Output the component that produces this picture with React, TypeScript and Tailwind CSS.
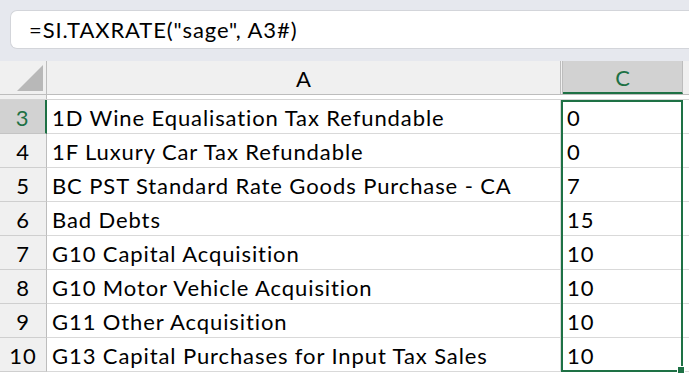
import React from "react";

const rows: [string, string, string][] = [
  ["3", "1D Wine Equalisation Tax Refundable", "0"],
  ["4", "1F Luxury Car Tax Refundable", "0"],
  ["5", "BC PST Standard Rate Goods Purchase - CA", "7"],
  ["6", "Bad Debts", "15"],
  ["7", "G10 Capital Acquisition", "10"],
  ["8", "G10 Motor Vehicle Acquisition", "10"],
  ["9", "G11 Other Acquisition", "10"],
  ["10", "G13 Capital Purchases for Input Tax Sales", "10"],
];

export default function App() {
  return (
    <div
      className="w-[689px] h-[376px] overflow-hidden bg-white text-black"
      style={{ fontFamily: "Lato, 'Open Sans', sans-serif" }}
    >
      {/* formula area */}
      <div className="h-[61px] bg-[#e6e8ee] pt-[10px] pl-[10px]">
        <div className="h-[39px] bg-white rounded-l-[7px] border border-r-0 border-[#d3d5da] flex items-center pl-[18px] text-[22px] tracking-[0.9px] leading-none">
          =SI.TAXRATE("sage", A3#)
        </div>
      </div>

      {/* column header row */}
      <div className="flex h-[34px] bg-[#f0f0f0] border-b border-[#bdbdbd]">
        <div className="w-[47px] shrink-0 border-r border-[#bdbdbd] relative">
          <div
            className="absolute right-[3px] bottom-[3px] w-[26px] h-[26px] bg-[#b8b8b8]"
            style={{ clipPath: "polygon(100% 0, 100% 100%, 0 100%)" }}
          />
        </div>
        <div className="w-[514px] shrink-0 border-r border-[#bdbdbd] flex items-center justify-center text-[22px] pt-[1px]">
          A
        </div>
        <div className="w-[2px] shrink-0 border-r border-[#bdbdbd]" />
        <div className="w-[120px] shrink-0 border-r border-[#bdbdbd] bg-[#d2d2d2] border-b-2 border-b-[#1e7145] flex items-center justify-center text-[22px] text-[#1e7145] pt-[2px]">
          C
        </div>
        <div className="flex-1" />
      </div>

      {/* hidden rows strip */}
      <div className="flex h-[5px] border-b border-[#d4d4d4]">
        <div className="w-[47px] shrink-0 bg-[#f0f0f0] border-r border-[#bdbdbd]" />
        <div className="flex-1" />
      </div>

      {/* data rows */}
      <div className="relative">
        {rows.map(([n, a, c], i) => (
          <div key={n} className="flex h-[34px] text-[22px] tracking-[0.9px]">
            <div
              className={
                "w-[47px] shrink-0 border-b flex items-center justify-center pt-[2px] " +
                (i === 0
                  ? "bg-[#d2d2d2] border-b-[#c4c4c4] border-r-2 border-r-[#1e7145] text-[#1e7145]"
                  : "bg-[#f0f0f0] border-b-[#cfcfcf] border-r border-r-[#bdbdbd]")
              }
            >
              {n}
            </div>
            <div className="w-[514px] shrink-0 border-b border-r border-[#d9d9d9] flex items-center pl-[5px] pt-[2px] whitespace-nowrap">
              {a}
            </div>
            <div className="w-[2px] shrink-0 border-b border-r border-[#d9d9d9]" />
            <div className="w-[120px] shrink-0 border-b border-r border-[#d9d9d9] flex items-center pl-[4px] pt-[2px]">
              {c}
            </div>
            <div className="flex-1 border-b border-[#d9d9d9]" />
          </div>
        ))}
        {/* selection box */}
        <div className="absolute left-[561px] top-0 w-[122px] h-[272px] border-2 border-[#1e7145] pointer-events-none" />
        <div className="absolute left-[677px] top-[266px] w-[8px] h-[8px] bg-[#1e7145] border border-white" />
      </div>
    </div>
  );
}
